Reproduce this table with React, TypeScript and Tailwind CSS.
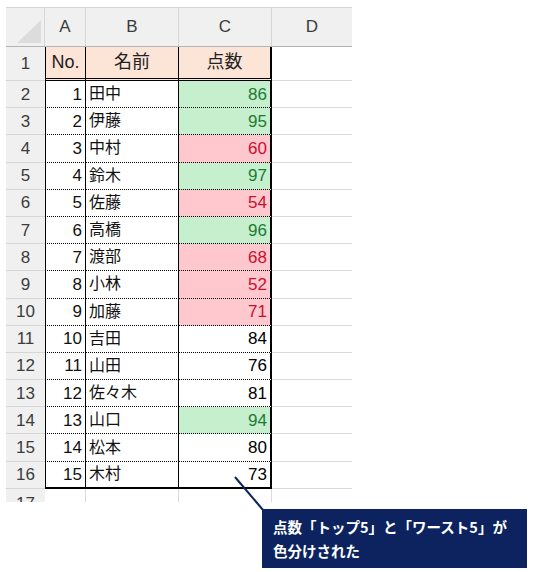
const rows: [number, string, number, '' | 'g' | 'r'][] = [
  [1, '田中', 86, 'g'],
  [2, '伊藤', 95, 'g'],
  [3, '中村', 60, 'r'],
  [4, '鈴木', 97, 'g'],
  [5, '佐藤', 54, 'r'],
  [6, '高橋', 96, 'g'],
  [7, '渡部', 68, 'r'],
  [8, '小林', 52, 'r'],
  [9, '加藤', 71, 'r'],
  [10, '吉田', 84, ''],
  [11, '山田', 76, ''],
  [12, '佐々木', 81, ''],
  [13, '山口', 94, 'g'],
  [14, '松本', 80, ''],
  [15, '木村', 73, ''],
];

const fill = {
  g: 'bg-[#c6efce] text-[#1e7a32]',
  r: 'bg-[#ffc7ce] text-[#c8102e]',
  '': 'bg-white text-black',
};

export default function App() {
  return (
    <div className="relative w-[533px] h-[572px] bg-white overflow-hidden font-['Liberation_Sans','Noto_Sans_CJK_JP',sans-serif]">
      {/* sheet */}
      <div className="ml-[6px] pt-[7px] w-[346px] h-[502px] overflow-hidden">
        {/* column headers */}
        <div className="flex h-[40px] bg-[#f0f0f0] border-t border-[#d6d6d6] border-b border-b-[#b4b4b4] text-[17px] text-[#3c3c3c]">
          <div className="w-[39px] flex items-end justify-end pr-[3px] pb-[3px] border-r border-[#d6d6d6]">
            <svg width="24" height="23" viewBox="0 0 24 23">
              <polygon points="24,0 24,23 0,23" fill="#dcdcdc" />
            </svg>
          </div>
          <div className="w-[41px] flex items-center justify-center border-r border-[#d6d6d6]">A</div>
          <div className="w-[93px] flex items-center justify-center border-r border-[#d6d6d6]">B</div>
          <div className="w-[93px] flex items-center justify-center border-r border-[#d6d6d6]">C</div>
          <div className="w-[80px] flex items-center justify-center">D</div>
        </div>

        {/* row 1 */}
        <div className="flex h-[34px] text-[18px]">
          <div className="w-[39px] flex items-center justify-center bg-[#f0f0f0] text-[#3c3c3c] text-[17px] border-b border-[#d6d6d6]">1</div>
          <div className="w-[41px] flex items-center justify-center bg-[#fce4d6] border-l border-r border-black border-b-[3px] [border-bottom-style:double] text-[#222]">No.</div>
          <div className="w-[93px] flex items-center justify-center bg-[#fce4d6] border-r border-black border-b-[3px] [border-bottom-style:double] text-[#222]">名前</div>
          <div className="w-[93px] flex items-center justify-center bg-[#fce4d6] border-r-2 border-black border-b-[3px] [border-bottom-style:double] text-[#222]">点数</div>
          <div className="w-[80px] border-b border-[#dadada]" />
        </div>

        {rows.map(([no, name, score, k], i) => {
          const last = i === rows.length - 1;
          const rb = last ? 'border-b-2' : 'border-b [border-bottom-style:dotted]';
          return (
            <div key={no} className="flex h-[27.2px] text-[16px] leading-none">
              <div className="w-[39px] flex items-center justify-center bg-[#f0f0f0] text-[#3c3c3c] text-[17px] border-b border-[#d6d6d6]">
                {i + 2}
              </div>
              <div className={`w-[41px] flex items-center justify-end pr-[3px] text-[17px] border-l border-r border-black ${rb} text-[#111]`}>
                {no}
              </div>
              <div className={`w-[93px] flex items-center pl-[3px] border-r border-black ${rb} text-[#111]`}>
                {name}
              </div>
              <div className={`w-[93px] flex items-center justify-end pr-[3px] text-[17px] border-r-2 border-black ${rb} ${fill[k]}`}>
                {score}
              </div>
              <div className="w-[80px] border-b border-[#dadada]" />
            </div>
          );
        })}

        {/* row 17 (cut off) */}
        <div className="flex h-[27px]">
          <div className="w-[39px] flex items-start justify-center pt-[2px] bg-[#f0f0f0] text-[#3c3c3c] text-[17px]">17</div>
          <div className="w-[41px] border-r border-[#dadada]" />
          <div className="w-[93px] border-r border-[#dadada]" />
          <div className="w-[93px] border-r border-[#dadada]" />
          <div className="w-[80px]" />
        </div>
      </div>

      {/* callout */}
      <svg className="absolute left-0 top-0" width="533" height="572">
        <line x1="235" y1="477" x2="263" y2="510" stroke="#0c2360" strokeWidth="2" />
      </svg>
      <div className="absolute left-[262px] top-[509px] w-[265px] h-[59px] bg-[#0c2360] text-white font-bold text-[14.5px] leading-[24px] pl-[11px] pt-[6px] font-['Noto_Sans_CJK_JP',sans-serif]">
        <div>点数「トップ5」と「ワースト5」が</div>
        <div>色分けされた</div>
      </div>
    </div>
  );
}
